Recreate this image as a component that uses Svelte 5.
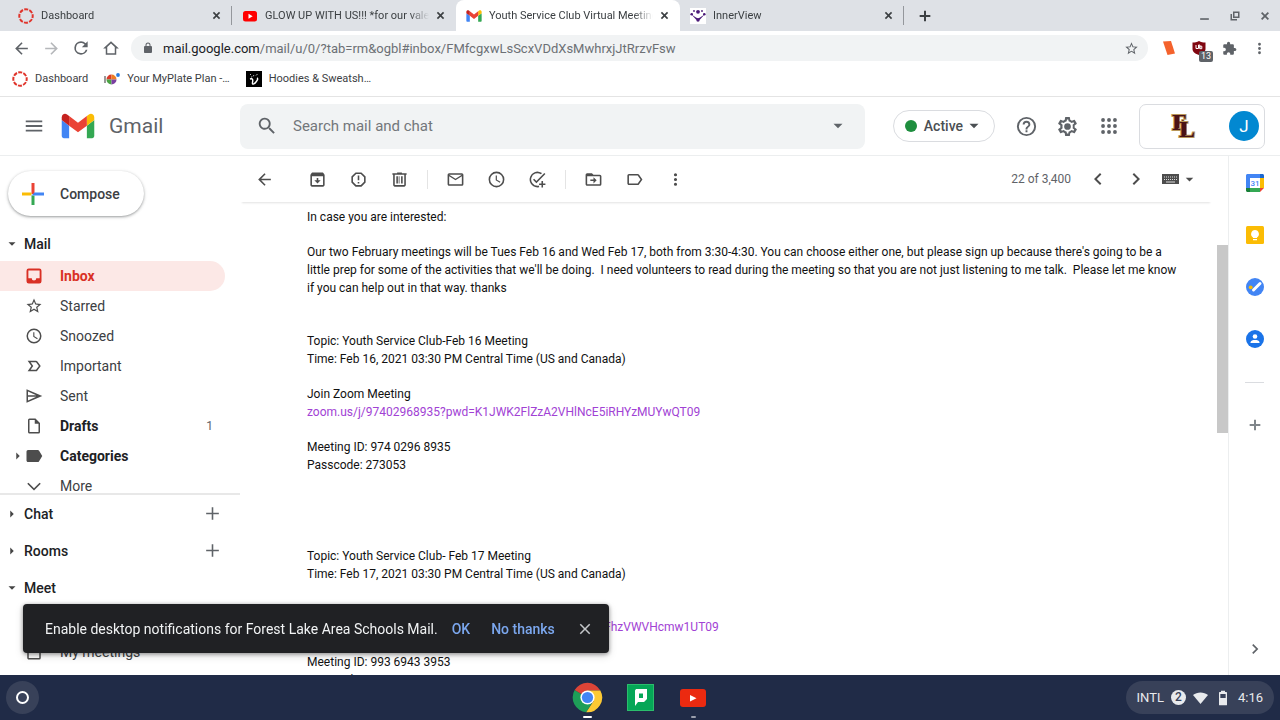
<script lang="ts">
  const icons: Record<string, string> = {
    back: 'M20 11H7.83l5.59-5.59L12 4l-8 8 8 8 1.41-1.41L7.83 13H20v-2z',
    forward: 'M12 4l-1.41 1.41L16.17 11H4v2h12.17l-5.58 5.59L12 20l8-8z',
    reload: 'M17.65 6.35A7.96 7.96 0 0 0 12 4a8 8 0 1 0 7.73 10h-2.08A6 6 0 1 1 12 6c1.66 0 3.14.69 4.22 1.78L13 11h7V4l-2.35 2.35z',
    home: 'M12 3L1.5 12.5H5V21h14v-8.500h3.500L12 3zm5 16H7v-8.300l5-4.600 5 4.600V19z',
    lock: 'M18 8h-1V6A5 5 0 0 0 7 6v2H6a2 2 0 0 0-2 2v10c0 1.100.9 2 2 2h12a2 2 0 0 0 2-2V10a2 2 0 0 0-2-2zM9 6a3 3 0 0 1 6 0v2H9V6z',
    star: 'M22 9.24l-7.19-.62L12 2 9.190 8.630 2 9.240l5.460 4.730L5.820 21 12 17.270 18.180 21l-1.630-7.030L22 9.240zM12 15.400l-3.760 2.270 1-4.280-3.320-2.880 4.380-.38L12 6.100l1.710 4.040 4.380.38-3.320 2.880 1 4.280L12 15.400z',
    puzzle: 'M20.5 11H19V7c0-1.1-.9-2-2-2h-4V3.500a2.500 2.500 0 0 0-5 0V5H4c-1.100 0-2 .9-2 2v3.800h1.500a2.700 2.700 0 0 1 0 5.400H2V20c0 1.100.9 2 2 2h3.800v-1.500a2.700 2.700 0 0 1 5.400 0V22H17c1.100 0 2-.9 2-2v-4h1.500a2.500 2.500 0 0 0 0-5z',
    dots: 'M12 8a2 2 0 1 0 0-4 2 2 0 0 0 0 4zm0 2a2 2 0 1 0 0 4 2 2 0 0 0 0-4zm0 6a2 2 0 1 0 0 4 2 2 0 0 0 0-4z',
    close: 'M19 6.41L17.59 5 12 10.590 6.410 5 5 6.410 10.590 12 5 17.590 6.410 19 12 13.410 17.590 19 19 17.590 13.410 12z',
    closeBold: 'M20 6.500L17.500 4 12 9.500 6.500 4 4 6.500 9.500 12 4 17.500 6.500 20l5.500-5.500 5.500 5.500 2.500-2.500-5.500-5.500z',
    plus: 'M20 13h-7v7h-2v-7H4v-2h7V4h2v7h7v2z',
    plusBold: 'M20 13.500h-6.500V20h-3v-6.500H4v-3h6.500V4h3v6.500H20v3z',
    minimize: 'M4 17h16v3H4z',
    restore: 'M8 3h13v13H8zm3 3v7h7V6zM3 8h3v10h10v3H3z',
    menu: 'M3 18h18v-2H3v2zm0-5h18v-2H3v2zm0-7v2h18V6H3z',
    search: 'M15.500 14h-.79l-.28-.27A6.500 6.500 0 1 0 13.730 14.430l.27.28v.79l5 4.990L20.490 19l-4.990-5zm-6 0a4.500 4.500 0 1 1 0-9 4.500 4.500 0 0 1 0 9z',
    down: 'M6 9l6 6 6-6z',
    right: 'M9 6l6 6-6 6z',
    help: 'M11 18h2v-2h-2v2zm1-16a10 10 0 1 0 0 20 10 10 0 0 0 0-20zm0 18a8 8 0 1 1 0-16 8 8 0 0 1 0 16zm0-14a4 4 0 0 0-4 4h2a2 2 0 1 1 4 0c0 2-3 1.750-3 5h2c0-2.250 3-2.500 3-5a4 4 0 0 0-4-4z',
    gear: 'M19.430 12.980a7.800 7.800 0 0 0 0-1.960l2.110-1.650a.5.5 0 0 0 .12-.64l-2-3.460a.5.5 0 0 0-.61-.22l-2.490 1a7.300 7.300 0 0 0-1.690-.98l-.38-2.650A.49.49 0 0 0 14 2h-4a.49.49 0 0 0-.49.42l-.38 2.650c-.61.25-1.170.59-1.690.98l-2.490-1a.5.5 0 0 0-.61.22l-2 3.460a.5.5 0 0 0 .12.64l2.110 1.650a7.900 7.900 0 0 0 0 1.960l-2.110 1.650a.5.5 0 0 0-.12.64l2 3.460a.5.5 0 0 0 .61.22l2.490-1c.52.4 1.080.73 1.690.98l.38 2.650c.03.24.24.42.49.42h4c.25 0 .46-.18.49-.42l.38-2.650c.61-.25 1.170-.59 1.690-.98l2.490 1a.5.5 0 0 0 .61-.22l2-3.460a.5.5 0 0 0-.12-.64l-2.110-1.650zm-1.980-1.710a5.600 5.600 0 0 1 0 1.460l-.14 1.130 1.590 1.240-.7 1.210-1.870-.76-.92.72a5.700 5.700 0 0 1-1.250.73l-1.060.43-.28 1.990h-1.400l-.28-1.990-1.060-.43a5.600 5.600 0 0 1-1.230-.71l-.93-.74-1.870.76-.7-1.210 1.590-1.240-.14-1.130a6 6 0 0 1 0-1.460l.14-1.130-1.590-1.240.7-1.210 1.870.76.92-.72a5.700 5.700 0 0 1 1.250-.73l1.060-.43.28-1.990h1.400l.28 1.990 1.060.43c.43.18.83.41 1.230.71l.93.740 1.870-.76.7 1.210-1.590 1.240zM12 8.500a3.500 3.500 0 1 1 0 7 3.500 3.500 0 0 1 0-7z',
    archive: 'M20.540 5.230l-1.390-1.680C18.880 3.210 18.470 3 18 3H6c-.47 0-.88.21-1.160.55L3.460 5.230C3.170 5.570 3 6.020 3 6.500V19c0 1.100.9 2 2 2h14c1.100 0 2-.9 2-2V6.500c0-.48-.17-.93-.46-1.270zM5 19V8h14v11H5zm8-9h-2v3H8l4 4 4-4h-3z',
    spam: 'M15.730 3H8.270L3 8.270v7.460L8.270 21h7.460L21 15.730V8.270L15.730 3zM19 14.900L14.900 19H9.100L5 14.900V9.100L9.100 5h5.800L19 9.100v5.800zM11 7h2v6h-2zM11 15h2v2h-2z',
    trash: 'M15 4V3H9v1H3v2h1v13c0 1.100.9 2 2 2h12c1.100 0 2-.9 2-2V6h1V4h-6zm3 15H6V6h12v13zM8 8h2v9H8zM14 8h2v9h-2zM11 8h1v9h-1z',
    mail: 'M20 4H4a2 2 0 0 0-2 2v12c0 1.100.9 2 2 2h16a2 2 0 0 0 2-2V6a2 2 0 0 0-2-2zm0 14H4V8l8 5 8-5v10zm-8-7L4 6h16l-8 5z',
    clock: 'M12 2a10 10 0 1 0 0 20 10 10 0 0 0 0-20zm0 18a8 8 0 1 1 0-16 8 8 0 0 1 0 16zm.5-13H11v6l5.200 3.200.8-1.300-4.500-2.700V7z',
    task: 'M22 5.180L10.590 16.600l-4.240-4.240 1.410-1.410 2.830 2.830 10-10L22 5.180zM12 20a8 8 0 1 1 4.250-14.780l1.460-1.460A10 10 0 1 0 14 21.800v-2.100c-.6.2-1.300.3-2 .3zM19 14h-2v3h-3v2h3v3h2v-3h3v-2h-3z',
    move: 'M20 6h-8l-2-2H4a2 2 0 0 0-2 2v12c0 1.100.9 2 2 2h16a2 2 0 0 0 2-2V8a2 2 0 0 0-2-2zm0 12H4V8h16v10zm-8-1l4-4-4-4v3H8v2h4z',
    label: 'M16 5H5a2 2 0 0 0-2 2v10c0 1.100.9 2 2 2h11c.7 0 1.300-.3 1.600-.8L22 12l-4.400-6.200A2 2 0 0 0 16 5zm0 12H5V7h11l3.550 5L16 17z',
    labelFull: 'M17 4H4a2 2 0 0 0-2 2v12c0 1.100.9 2 2 2h13c.7 0 1.300-.3 1.600-.8L23 12l-4.400-7.200A2 2 0 0 0 17 4z',
    prev: 'M15.400 7.400L14 6l-6 6 6 6 1.400-1.400-4.600-4.600z',
    next: 'M10 6L8.600 7.400l4.600 4.600-4.600 4.600L10 18l6-6z',
    inbox: 'M19 2H5a3 3 0 0 0-3 3v14a3 3 0 0 0 3 3h14a3 3 0 0 0 3-3V5a3 3 0 0 0-3-3zm.5 13H15a3 3 0 0 1-6 0H4.500V4.500h15V15z',
    important: 'M3.500 5h11.200c.7 0 1.300.3 1.600.8L21 12l-4.700 6.200c-.3.500-.9.800-1.600.8H3.500l5-7-5-7zm4 2l3.500 5-3.500 5h7.200l3.800-5-3.800-5H7.500z',
    send: 'M2 3v18l21-9L2 3zm2 3l11 5H4V6zm0 7h11L4 18v-5z',
    draft: 'M14 2H6a2 2 0 0 0-2 2v16c0 1.100.9 2 2 2h12a2 2 0 0 0 2-2V8l-6-6zM6 20V4h7v5h5v11H6z',
    expand: 'M4.600 7.500L12 15l7.400-7.500L21 9l-9 9-9-9z',
    calendar: 'M19 4h-1V2h-2v2H8V2H6v2H5a2 2 0 0 0-2 2v14c0 1.100.9 2 2 2h14a2 2 0 0 0 2-2V6a2 2 0 0 0-2-2zm0 16H5V9h14v11z',
    video: 'M17 10V7a1 1 0 0 0-1-1H4a1 1 0 0 0-1 1v10c0 .6.4 1 1 1h12a1 1 0 0 0 1-1v-3l4 4V6l-4 4z',
    battery: 'M17 3h-2V1H9v2H7a1 1 0 0 0-1 1v18c0 .6.4 1 1 1h10c.6 0 1-.4 1-1V4c0-.6-.4-1-1-1zm-1 9H8V6h8v6z',
  };

  const tabs = [
    { title: 'Dashboard', logo: 'canvas' },
    { title: 'GLOW UP WITH US!!! *for our valentines', logo: 'youtube' },
    { title: 'Youth Service Club Virtual Meetings', logo: 'gmail', active: true },
    { title: 'InnerView', logo: 'innerview' },
  ];

  const bookmarks = [
    { title: 'Dashboard', logo: 'canvas' },
    { title: 'Your MyPlate Plan -…', logo: 'myplate' },
    { title: 'Hoodies & Sweatsh…', logo: 'hoodie' },
  ];

  const folders = [
    { name: 'Inbox', icon: 'inbox', active: true },
    { name: 'Starred', icon: 'star' },
    { name: 'Snoozed', icon: 'clock' },
    { name: 'Important', icon: 'important' },
    { name: 'Sent', icon: 'send' },
    { name: 'Drafts', icon: 'draft', bold: true, count: 1 },
    { name: 'Categories', icon: 'labelFull', bold: true, arrow: true },
    { name: 'More', icon: 'expand' },
  ];

  const actions = [
    [
      { name: 'Archive', icon: 'archive' },
      { name: 'Report spam', icon: 'spam' },
      { name: 'Delete', icon: 'trash' },
    ],
    [
      { name: 'Mark as unread', icon: 'mail' },
      { name: 'Snooze', icon: 'clock' },
      { name: 'Add to Tasks', icon: 'task' },
    ],
    [
      { name: 'Move to', icon: 'move' },
      { name: 'Labels', icon: 'label' },
      { name: 'More', icon: 'dots' },
    ],
  ];

  let showToast = $state(true);
  let query = $state('');
</script>

{#snippet icon(name: string, size = 19)}
  <svg class="icon" width={size} height={size} viewBox="0 0 24 24" fill-rule="evenodd" aria-hidden="true">
    <path d={icons[name]} />
  </svg>
{/snippet}

{#snippet logo(name: string, size: number)}
  {#if name === 'canvas'}
    <svg width={size} height={size} viewBox="0 0 16 16">
      <circle cx="8" cy="8" r="6.700" fill="none" stroke="#e0342b" stroke-width="2" stroke-dasharray="4 1.260" stroke-dashoffset="2" />
    </svg>
  {:else if name === 'youtube'}
    <svg width={size} height={size} viewBox="0 0 16 16">
      <rect x="1" y="3" width="14" height="10.500" rx="2.500" fill="#f00" />
      <path d="M6.500 5.800v4.900l4.200-2.450z" fill="#fff" />
    </svg>
  {:else if name === 'gmail'}
    <svg width={size} height={size} viewBox="50 33 92 84">
      <path fill="#4285f4" d="M58 108h14V74L52 59v43c0 3.320 2.690 6 6 6" />
      <path fill="#34a853" d="M120 108h14c3.320 0 6-2.690 6-6V59l-20 15" />
      <path fill="#fbbc04" d="M120 48v26l20-15v-8c0-7.420-8.470-11.650-14.400-7.200" />
      <path fill="#ea4335" d="M72 74V48l24 18 24-18v26L96 92" />
      <path fill="#c5221f" d="M52 51v8l20 15V48l-5.600-4.200c-5.940-4.450-14.400-.22-14.400 7.200" />
    </svg>
  {:else if name === 'innerview'}
    <svg width={size} height={size} viewBox="0 0 16 16">
      <path fill="#fff" d="M0 0h16v16H0z" />
      <path d="M1.500 6.500L6 9.500l2 1 2-1 4.500-3-4.500 5-2 1-2-1z" fill="#4b1a78" />
      <g fill="#4b1a78">
        <circle cx="8" cy="3.800" r="1.900" /><circle cx="1.700" cy="6.300" r="1.300" /><circle cx="14.300" cy="6.300" r="1.300" />
        <circle cx="4" cy="3" r=".9" /><circle cx="12" cy="3" r=".9" /><circle cx="8" cy="12" r="1.700" />
      </g>
    </svg>
  {:else if name === 'myplate'}
    <svg width={size} height={size} viewBox="0 0 16 16">
      <path d="M1 5v7" stroke="#555" stroke-width="1.200" />
      <path d="M7.500 8.500v-5a5 5 0 0 0-5 5z" fill="#d93a2b" />
      <path d="M7.500 8.500v-5a5 5 0 0 1 5 5z" fill="#ef7d22" />
      <path d="M7.500 8.500v5a5 5 0 0 1-5-5z" fill="#4ba344" />
      <path d="M7.500 8.500v5a5 5 0 0 0 5-5z" fill="#7b3fa0" />
      <circle cx="14" cy="4" r="1.900" fill="#2a7de1" />
    </svg>
  {:else}
    <svg width={size} height={size} viewBox="0 0 16 16">
      <path d="M0 0h16v16H0z" />
      <path d="M4 8c3-1 3 1 2.500 3.500S8 13.500 10 11s2-3.500 1-4" fill="none" stroke="#fff" stroke-width="1.400" />
      <path d="M4 3l1 1M7 5.500l1-1.500M10 4.500L11.500 3M5 6h1" fill="none" stroke="#bbb" />
    </svg>
  {/if}
{/snippet}

<div class="screen">
  <header class="browser">
    <div class="tab-strip">
      {#each tabs as tab}
        <div class="tab" class:active={tab.active}>
          {@render logo(tab.logo, 16)}
          <span class="tab-title">{tab.title}</span>
          <button aria-label="Close tab">{@render icon('closeBold', 11)}</button>
        </div>
      {/each}
      <button class="new-tab" aria-label="New tab">{@render icon('plusBold', 16)}</button>
      <div class="window-controls">
        <button aria-label="Minimize">{@render icon('minimize', 13)}</button>
        <button aria-label="Restore">{@render icon('restore', 12)}</button>
        <button aria-label="Close">{@render icon('closeBold', 12)}</button>
      </div>
    </div>

    <div class="nav-bar">
      <button aria-label="Back">{@render icon('back', 19)}</button>
      <button class="disabled" aria-label="Forward" disabled>{@render icon('forward', 19)}</button>
      <button aria-label="Reload">{@render icon('reload', 20)}</button>
      <button aria-label="Home">{@render icon('home', 18)}</button>
      <div class="address">
        {@render icon('lock', 12)}
        <a class="url" href="#inbox"><b>mail.google.com</b>/mail/u/0/?tab=rm&ogbl#inbox/FMfcgxwLsScxVDdXsMwhrxjJtRrzvFsw</a>
        <button aria-label="Bookmark this tab">{@render icon('star', 15)}</button>
      </div>
      <div class="extensions">
        <button aria-label="Reader extension">
          <svg width="14" height="16" viewBox="0 0 14 16"><path d="M1 1.500L9 1l4 12.500L5.500 15z" fill="#f4622c" /></svg>
        </button>
        <button class="blocker" aria-label="Ad blocker">
          <svg width="14" height="14" viewBox="0 0 14 14">
            <path d="M7 0c2 1.200 4 1.500 6.500 1.500V8c0 3-3 5-6.500 6C3.500 13 .5 11 .5 8V1.500C3 1.500 5 1.200 7 0z" fill="#800610" />
            <path d="M4 4v3.500h2.500V4M6.500 4h1.300v3.500M7.800 5.200h2v2.500h-2z" fill="none" stroke="#fff" />
          </svg>
          <span class="badge">13</span>
        </button>
        <button aria-label="Extensions">{@render icon('puzzle', 15)}</button>
        <button aria-label="Browser menu">{@render icon('dots', 17)}</button>
      </div>
    </div>

    <nav class="bookmarks">
      {#each bookmarks as bookmark}
        <a href="#bookmark">{@render logo(bookmark.logo, 16)}{bookmark.title}</a>
      {/each}
    </nav>
  </header>

  <header class="app-bar">
    <div class="brand">
      <button aria-label="Main menu">{@render icon('menu', 22)}</button>
      {@render logo('gmail', 34)}
      <span class="brand-name">Gmail</span>
    </div>
    <form class="search">
      <button type="button" aria-label="Search">{@render icon('search', 22)}</button>
      <input type="text" aria-label="Search mail and chat" placeholder="Search mail and chat" bind:value={query} />
      <button type="button" aria-label="Search options">{@render icon('down', 18)}</button>
    </form>
    <div class="app-tools">
      <button class="status"><span class="dot"></span>Active{@render icon('down', 18)}</button>
      <button class="tool" aria-label="Support">{@render icon('help', 23)}</button>
      <button class="tool" aria-label="Settings">{@render icon('gear', 23)}</button>
      <button class="tool" aria-label="Google apps">
        <svg class="icon" width="22" height="22" viewBox="0 0 24 24">
          {#each [5.5, 12, 18.5] as cy}
            {#each [5.5, 12, 18.5] as cx}
              <circle {cx} {cy} r="2.100" />
            {/each}
          {/each}
        </svg>
      </button>
      <button class="account" aria-label="Account">
        <svg class="school" width="28" height="30" viewBox="0 0 28 30">
          <g font-family="Liberation Serif, serif" font-weight="bold" font-size="24" fill="#4a1218" stroke="#b8975a" stroke-width="2" paint-order="stroke">
            <text x="3" y="19">F</text>
            <text x="10" y="26">L</text>
          </g>
          <path d="M8.500 5v12M15.500 12v12" stroke="#4a1218" stroke-width="4" />
        </svg>
        <span class="avatar">J</span>
      </button>
    </div>
  </header>

  <div class="body">
    <aside class="sidebar">
      <button class="compose">
        <svg width="24" height="24" viewBox="0 0 24 24">
          <path d="M10.500 1h3v11h-3z" fill="#ea4335" />
          <path d="M1 10.500h9.500v3H1z" fill="#fbbc04" />
          <path d="M10.500 13.500h3V23h-3z" fill="#34a853" />
          <path d="M10.500 13.500l3-3H23v3z" fill="#4285f4" />
        </svg>
        Compose
      </button>

      <button class="section">{@render icon('down', 14)}Mail</button>
      <nav class="folders">
        {#each folders as folder}
          <a href="#folder" class:active={folder.active} class:bold={folder.bold}>
            <span class="arrow">{#if folder.arrow}{@render icon('right', 14)}{/if}</span>
            {@render icon(folder.icon, 18)}
            <span class="folder-name">{folder.name}</span>
            {#if folder.count}<span class="count">{folder.count}</span>{/if}
          </a>
        {/each}
      </nav>

      <div class="panels">
        <div class="panel-head">
          <button class="section">{@render icon('right', 14)}Chat</button>
          <button class="add" aria-label="Start a chat">{@render icon('plus', 19)}</button>
        </div>
        <div class="panel-head">
          <button class="section">{@render icon('right', 14)}Rooms</button>
          <button class="add" aria-label="Create or find a room">{@render icon('plus', 19)}</button>
        </div>
        <div class="panel-head">
          <button class="section">{@render icon('down', 14)}Meet</button>
        </div>
        <nav class="meet">
          <a href="#new"><span class="arrow"></span>{@render icon('video', 18)}New meeting</a>
          <a href="#mine"><span class="arrow"></span>{@render icon('calendar', 18)}My meetings</a>
        </nav>
      </div>
    </aside>

    <main class="message">
      <div class="toolbar">
        <button class="to-inbox" aria-label="Back to Inbox">{@render icon('back')}</button>
        {#each actions as group, i}
          <div class="group" class:divided={i > 0}>
            {#each group as action}
              <button aria-label={action.name}>{@render icon(action.icon)}</button>
            {/each}
          </div>
        {/each}
        <div class="pager">
          <span>22 of 3,400</span>
          <button aria-label="Newer">{@render icon('prev', 24)}</button>
          <button aria-label="Older">{@render icon('next', 24)}</button>
          <button class="keyboard" aria-label="Select input tool">
            <svg class="icon" width="17" height="12" viewBox="0 0 17 12">
              <path d="M0 1h17v10H0z" />
              <path d="M2 4h13M2 6.500h13" stroke="#ddd" stroke-width="1" stroke-dasharray="1 1" />
              <path d="M4 9h9" stroke="#ddd" />
            </svg>
            {@render icon('down', 15)}
          </button>
        </div>
      </div>

      <article class="mail-text">
        <p>In case you are interested:</p>
        <p>
          Our two February meetings will be Tues Feb 16 and Wed Feb 17, both from 3:30-4:30. You can choose either one, but please sign up because there's going to be a little prep for some of the activities that we'll be doing.&nbsp; I need volunteers to read during the meeting so that you are not just listening to me talk.&nbsp; Please let me know if you can help out in that way. thanks
        </p>
        <p class="topic">
          Topic: Youth Service Club-Feb 16 Meeting<br />
          Time: Feb 16, 2021 03:30 PM Central Time (US and Canada)
        </p>
        <p>
          Join Zoom Meeting<br />
          <a href="#zoom">zoom.us/j/97402968935?pwd=K1JWK2FlZzA2VHlNcE5iRHYzMUYwQT09</a>
        </p>
        <p>
          Meeting ID: 974 0296 8935<br />
          Passcode: 273053
        </p>
        <p class="second">
          Topic: Youth Service Club- Feb 17 Meeting<br />
          Time: Feb 17, 2021 03:30 PM Central Time (US and Canada)
        </p>
        <p>
          Join Zoom Meeting<br />
          <a href="#zoom">zoom.us/j/99369433953?pwd=SkN4b2VUdGw5cXBMalFhzVWVHcmw1UT09</a>
        </p>
        <p>
          Meeting ID: 993 6943 3953<br />
          Passcode: 273053
        </p>
      </article>
    </main>

    <div class="scroll-track"><div class="thumb"></div></div>

    <aside class="side-apps">
      <button aria-label="Calendar">
        <svg width="18" height="18" viewBox="0 0 18 18">
          <path d="M0 1.500C0 .7.700 0 1.500 0H14v4H4v10H0z" fill="#4285f4" />
          <path d="M14 0h2.500c.8 0 1.500.7 1.500 1.500V4h-4z" fill="#1967d2" />
          <path d="M14 4h4v10h-4z" fill="#fbbc04" />
          <path d="M4 14h10v4H4z" fill="#34a853" />
          <path d="M0 14h4v4H1.500C.7 18 0 17.300 0 16.500z" fill="#188038" />
          <path d="M14 14h4l-4 4z" fill="#ea4335" />
          <path d="M4 4h10v10H4z" fill="#fff" />
          <text x="9" y="12" text-anchor="middle" font-family="Roboto, sans-serif" font-size="8" font-weight="500" fill="#4285f4">31</text>
        </svg>
      </button>
      <button aria-label="Keep">
        <svg width="18" height="18" viewBox="0 0 18 18">
          <rect width="18" height="18" rx="1.500" fill="#fbbc04" />
          <path d="M9 4a4 4 0 0 0-2 7.400V12h4v-.6A4 4 0 0 0 9 4zM7 13h4v1.300H7z" fill="#fff" />
        </svg>
      </button>
      <button aria-label="Tasks">
        <svg width="18" height="18" viewBox="0 0 18 18">
          <circle cx="9" cy="9" r="9" fill="#4285f4" />
          <path d="M7.500 12L14 5.500" stroke="#fff" stroke-width="3" stroke-linecap="round" />
          <circle cx="4.700" cy="9.300" r="1.900" fill="#fbbc04" />
        </svg>
      </button>
      <button aria-label="Contacts">
        <svg width="18" height="18" viewBox="0 0 18 18">
          <circle cx="9" cy="9" r="9" fill="#1a73e8" />
          <circle cx="9" cy="6.500" r="2.300" fill="#fff" />
          <path d="M4.500 13v-.8C4.500 10.500 7 10 9 10s4.500.5 4.500 2.200v.8z" fill="#fff" />
        </svg>
      </button>
      <hr />
      <button class="addons" aria-label="Get add-ons">{@render icon('plusBold', 16)}</button>
      <button class="hide" aria-label="Hide side panel">{@render icon('next', 20)}</button>
    </aside>
  </div>

  {#if showToast}
    <div class="toast" role="alert">
      <span>Enable desktop notifications for Forest Lake Area Schools Mail.</span>
      <button class="ok" onclick={() => (showToast = false)}>OK</button>
      <button onclick={() => (showToast = false)}>No thanks</button>
      <button class="dismiss" aria-label="Dismiss" onclick={() => (showToast = false)}>{@render icon('close', 18)}</button>
    </div>
  {/if}

  <footer class="shelf">
    <button class="launcher" aria-label="Launcher"><span></span></button>
    <div class="pinned">
      <button class="running current" aria-label="Chrome">
        <svg width="31" height="31" viewBox="0 0 48 48">
          <path d="M24 24L4.080 12.500A23 23 0 0 0 22 46.900L33 29z" fill="#1e9e58" />
          <path d="M24 24L4.080 12.500A23 23 0 0 1 43.900 13H24z" fill="#dc4437" />
          <path d="M43.900 13H24v11l9.500 5.500L22 46.900A23 23 0 0 0 43.900 13z" fill="#fcc934" />
          <circle cx="24" cy="24" r="11" fill="#fff" />
          <circle cx="24" cy="24" r="8.700" fill="#4285f4" />
        </svg>
      </button>
      <button aria-label="Papercut">
        <svg width="27" height="27" viewBox="0 0 27 27">
          <path d="M0 0h27v27H0z" fill="#2bbd6c" />
          <path d="M1 1h25v25H1z" fill="#05a657" />
          <path d="M9 5h11v10l-3 3h-6l-3 4V6.500z" fill="#fff" />
          <path d="M12 9.500h4v4.500h-4z" fill="#05a657" />
        </svg>
      </button>
      <button class="running" aria-label="YouTube">
        <svg width="26" height="20" viewBox="0 0 26 20">
          <rect y="1" width="26" height="18" rx="3" fill="#eb2a10" />
          <path d="M10 7v6.500l6.500-3.200z" fill="#fff" />
        </svg>
      </button>
    </div>
    <button class="tray">
      INTL
      <span class="notices">2</span>
      <svg class="icon" width="15" height="12" viewBox="0 0 15 12"><path d="M0 3C4-.5 11-.5 15 3L7.500 12z" /></svg>
      {@render icon('battery', 16)}
      <span>4:16</span>
    </button>
  </footer>
</div>

<style>
  :global(body) {
    margin: 0;
  }

  .screen {
    display: flex;
    flex-direction: column;
    height: 100vh;
    overflow: hidden;
    background: #fff;
    color: #202124;
    font-family: Roboto, sans-serif;
    font-size: 14px;
  }

  button {
    display: flex;
    align-items: center;
    justify-content: center;
    flex-shrink: 0;
    padding: 0;
    border: none;
    background: none;
    color: #5f6368;
    font: inherit;
    cursor: pointer;
  }

  a {
    color: inherit;
    text-decoration: none;
  }

  svg {
    flex-shrink: 0;
  }

  .icon {
    fill: currentColor;
  }

  /* browser chrome */
  .browser {
    flex-shrink: 0;
    border-bottom: 1px solid #e4e4e4;
    font-size: 11px;
  }

  .tab-strip {
    display: flex;
    height: 31px;
    padding-left: 8px;
    background: #dee1e6;
    color: #3c4043;
  }

  .tab {
    display: flex;
    align-items: center;
    box-sizing: border-box;
    width: 224px;
    padding: 0 8px 0 10px;
    border-right: 1px solid transparent;
  }

  .tab:first-child,
  .tab:nth-child(4) {
    border-image: linear-gradient(transparent 20%, #94979c 20%, #94979c 80%, transparent 80%) 1;
  }

  .tab.active {
    border-radius: 8px 8px 0 0;
    background: #fff;
  }

  .tab button {
    width: 14px;
    color: #3c4043;
  }

  .tab-title {
    flex: 1;
    margin: 0 4px 0 7px;
    overflow: hidden;
    white-space: nowrap;
    mask-image: linear-gradient(to right, #000 88%, transparent);
  }

  .new-tab {
    width: 42px;
    color: #3c4043;
  }

  .window-controls {
    display: flex;
    gap: 18px;
    margin-left: auto;
    padding-right: 9px;
  }

  .nav-bar {
    display: flex;
    align-items: center;
    height: 34px;
    padding-left: 6px;
  }

  .nav-bar > button {
    width: 30px;
  }

  .disabled {
    color: #b5b7ba;
  }

  .address {
    display: flex;
    align-items: center;
    flex: 1;
    min-width: 0;
    height: 26px;
    margin-left: 5px;
    padding: 0 9px;
    border-radius: 13px;
    background: #f1f3f4;
    color: #5f6368;
  }

  .address > .icon {
    margin: 0 9px 0 2px;
  }

  .url {
    flex: 1;
    overflow: hidden;
    font-size: 13px;
    color: #6c7075;
  }

  .url b {
    font-weight: 400;
    color: #202124;
  }

  .extensions {
    display: flex;
    padding: 0 6px;
  }

  .extensions button {
    width: 30px;
  }

  .blocker {
    position: relative;
  }

  .badge {
    position: absolute;
    right: 1px;
    bottom: -5px;
    padding: 0 2px;
    border-radius: 2px;
    background: #5f6368;
    color: #fff;
    font-size: 9px;
    line-height: 11px;
  }

  .bookmarks {
    display: flex;
    align-items: center;
    gap: 16px;
    height: 27px;
    padding: 0 12px 4px;
    color: #3c4043;
  }

  .bookmarks a {
    display: flex;
    align-items: center;
    gap: 7px;
  }

  /* gmail header */
  .app-bar {
    display: flex;
    align-items: center;
    flex-shrink: 0;
    height: 58px;
    border-bottom: 1px solid #eceeef;
  }

  .brand {
    display: flex;
    align-items: center;
    width: 240px;
  }

  .brand button {
    margin: 0 16px 0 23px;
  }

  .brand-name {
    margin-left: 14px;
    font-size: 21px;
    color: #5f6368;
  }

  .search {
    display: flex;
    align-items: center;
    flex: 1;
    height: 45px;
    border-radius: 8px;
    background: #f1f3f4;
  }

  .search button {
    width: 53px;
  }

  .search input {
    flex: 1;
    min-width: 0;
    padding: 0;
    border: none;
    outline: none;
    background: none;
    font: 15px Roboto, sans-serif;
    color: #202124;
  }

  .search input::placeholder {
    color: #73777b;
    opacity: 1;
  }

  .app-tools {
    display: flex;
    align-items: center;
    padding: 0 15px 0 28px;
  }

  .status {
    gap: 7px;
    height: 32px;
    margin-right: 11px;
    padding: 0 11px;
    border: 1px solid #dadce0;
    border-radius: 17px;
    font-weight: 500;
    color: #4b4f53;
  }

  .status .icon {
    margin-left: -5px;
  }

  .dot {
    width: 12px;
    height: 12px;
    border-radius: 50%;
    background: #1e8e3e;
  }

  .tool {
    width: 41px;
  }

  .account {
    justify-content: space-between;
    width: 126px;
    height: 45px;
    margin-left: 10px;
    padding: 0 5px 0 29px;
    border: 1px solid #dadce0;
    border-radius: 7px;
  }

  .school {
    overflow: visible;
  }

  .avatar {
    width: 30px;
    border-radius: 50%;
    background: #0288d1;
    color: #fff;
    font-size: 17px;
    line-height: 30px;
  }

  /* left column */
  .body {
    display: flex;
    flex: 1;
    min-height: 0;
  }

  .sidebar {
    display: flex;
    flex-direction: column;
    flex-shrink: 0;
    width: 240px;
  }

  .compose {
    gap: 15px;
    flex-shrink: 0;
    align-self: flex-start;
    height: 45px;
    margin: 15px 0 10px 8px;
    padding: 0 24px 0 13px;
    border-radius: 23px;
    box-shadow: 0 1px 2px rgba(60, 64, 67, 0.35), 0 1px 3px 1px rgba(60, 64, 67, 0.15);
    font-weight: 500;
    color: #3c4043;
  }

  .section {
    justify-content: flex-start;
    gap: 5px;
    padding-left: 5px;
    font-weight: 500;
    color: #202124;
  }

  .section .icon {
    color: #444;
  }

  .sidebar > .section {
    height: 35px;
  }

  .folders {
    flex: 1;
    min-height: 0;
    overflow: hidden;
  }

  .folders a,
  .meet a {
    display: flex;
    align-items: center;
    height: 30px;
    margin-right: 15px;
    padding-right: 12px;
    border-radius: 0 15px 15px 0;
    color: #3c4043;
  }

  .folders .icon,
  .meet .icon {
    margin-right: 17px;
    color: #4d4d4d;
  }

  .folders .arrow,
  .meet .arrow {
    display: flex;
    justify-content: flex-end;
    width: 25px;
  }

  .folders .arrow .icon {
    margin: 0;
  }

  .folder-name {
    flex: 1;
  }

  .count {
    font-size: 12px;
    color: #5f6368;
  }

  .folders .bold {
    font-weight: 700;
    color: #202124;
  }

  .folders .bold .count {
    font-weight: 400;
  }

  .folders .active {
    background: #fce8e6;
    font-weight: 700;
    color: #d93025;
  }

  .folders .active .icon {
    color: #d93025;
  }

  .panels {
    flex-shrink: 0;
    height: 180px;
    overflow: hidden;
    border-top: 2px solid #e8e8e8;
  }

  .panel-head {
    display: flex;
    align-items: center;
    justify-content: space-between;
    height: 37px;
    padding-right: 18px;
  }

  .meet {
    padding-top: 1px;
  }

  /* open message */
  .message {
    display: flex;
    flex-direction: column;
    flex: 1;
    min-width: 0;
  }

  .toolbar {
    display: flex;
    align-items: center;
    flex-shrink: 0;
    height: 46px;
    margin-right: 5px;
    padding-left: 4px;
    box-shadow: 0 3px 2px -2px #e2e2e2;
  }

  .toolbar button {
    width: 41px;
    color: #4d4d4d;
  }

  .to-inbox {
    margin-right: 12px;
  }

  .group {
    display: flex;
    align-items: center;
  }

  .divided::before {
    width: 1px;
    height: 19px;
    margin: 0 7px;
    background: #e4e4e4;
    content: '';
  }

  .pager {
    display: flex;
    align-items: center;
    margin-left: auto;
    padding-right: 14px;
    font-size: 12px;
    color: #5f6368;
  }

  .pager span {
    margin-right: 8px;
  }

  .pager button {
    width: 38px;
  }

  .pager .keyboard {
    gap: 3px;
    margin-left: 5px;
  }

  .mail-text {
    flex: 1;
    overflow: hidden;
    padding: 6px 35px 0 67px;
    color: #111;
    font-size: 12px;
    line-height: 18px;
  }

  .mail-text p {
    margin: 0 0 17px;
  }

  .mail-text .topic {
    margin-top: 35px;
  }

  .mail-text .second {
    margin-top: 73px;
  }

  .mail-text a {
    color: #a142d4;
  }

  .scroll-track {
    flex-shrink: 0;
    width: 11px;
    padding-top: 89px;
  }

  .thumb {
    height: 188px;
    background: #c8c8c8;
  }

  .side-apps {
    display: flex;
    flex-direction: column;
    align-items: center;
    flex-shrink: 0;
    gap: 34px;
    box-sizing: border-box;
    width: 52px;
    padding: 18px 0 16px;
    border-left: 1px solid #eceeef;
  }

  hr {
    width: 19px;
    margin: 0;
    border: none;
    border-top: 1px solid #dadce0;
  }

  .addons {
    color: #80868b;
  }

  .hide {
    margin-top: auto;
  }

  .toast {
    position: fixed;
    bottom: 67px;
    left: 23px;
    display: flex;
    align-items: center;
    height: 49px;
    padding: 0 15px 0 22px;
    border-radius: 4px;
    background: #202124;
    box-shadow: 0 1px 4px rgba(0, 0, 0, 0.4), 0 3px 8px rgba(0, 0, 0, 0.15);
    color: #f1f3f4;
  }

  .toast button {
    margin-left: 21px;
    font-weight: 500;
    color: #7ba7ee;
  }

  .toast .ok {
    margin-left: 14px;
  }

  .toast .dismiss {
    color: #c4c7ca;
  }

  /* system shelf */
  .shelf {
    display: grid;
    grid-template-columns: 1fr auto 1fr;
    align-items: center;
    flex-shrink: 0;
    height: 45px;
    padding: 0 6px;
    background: #202b47;
  }

  .launcher {
    width: 33px;
    height: 33px;
    border-radius: 50%;
    background: #384159;
  }

  .launcher span {
    width: 9px;
    height: 9px;
    border: 2px solid #fff;
    border-radius: 50%;
  }

  .pinned {
    display: flex;
  }

  .pinned button {
    position: relative;
    width: 53px;
    height: 45px;
  }

  .running::after {
    position: absolute;
    bottom: 2px;
    width: 5px;
    height: 2px;
    border-radius: 1px;
    background: #9a9fac;
    content: '';
  }

  .current::after {
    width: 9px;
    background: #fff;
  }

  .tray {
    justify-self: end;
    gap: 7px;
    height: 33px;
    padding: 0 11px;
    border-radius: 17px;
    background: #384159;
    color: #e8eaed;
    font-size: 13px;
  }

  .notices {
    width: 15px;
    border-radius: 50%;
    background: #e8eaed;
    color: #384159;
    font-size: 12px;
    font-weight: 500;
    line-height: 15px;
  }
</style>
